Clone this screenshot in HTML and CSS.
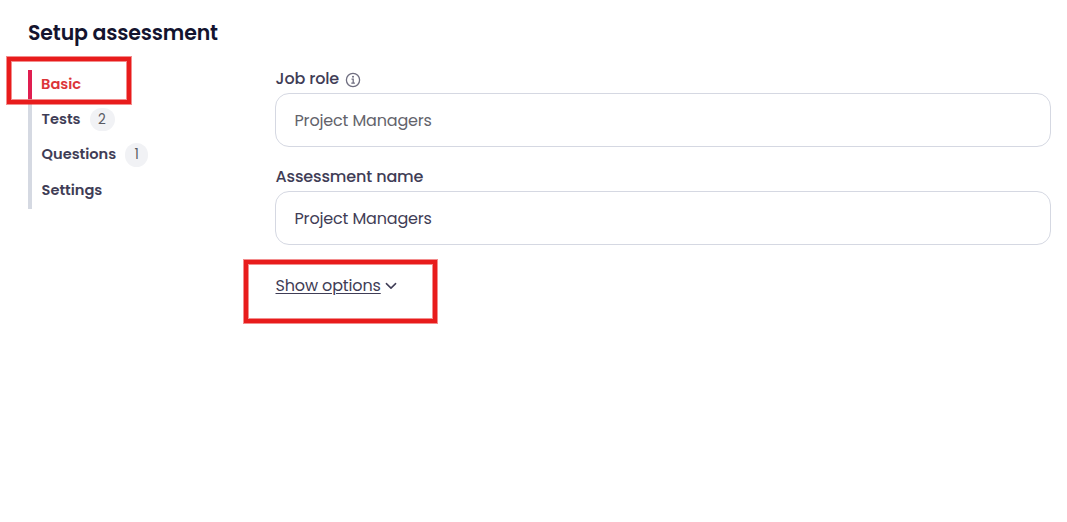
FILE: index.html
```html
<!DOCTYPE html>
<html lang="en">
<head>
<meta charset="utf-8">
<title>Setup assessment</title>
<link rel="stylesheet" href="styles.css">
</head>
<body>
<h1 class="title">Setup assessment</h1>
<div class="layout">
  <nav class="steps">
    <a class="step active">Basic</a>
    <a class="step tests">Tests<span class="count wide">2</span></a>
    <a class="step questions">Questions<span class="count">1</span></a>
    <a class="step settings">Settings</a>
  </nav>
  <main class="form">
    <div class="label first"><span>Job role</span>
      <svg class="info" viewBox="0 0 16 16" fill="none" stroke="#6f6e80" stroke-width="1.3"><circle cx="8" cy="8" r="6.6"/><path d="M6.5 7.2H8.2V11M6.3 11.1H9.9"/><circle cx="8" cy="4.8" r="1" fill="#6f6e80" stroke="none"/></svg>
    </div>
    <div class="field muted">Project Managers</div>
    <div class="label second">Assessment name</div>
    <div class="field">Project Managers</div>
    <a class="options"><span class="link">Show options</span>
      <svg class="chevron" viewBox="0 0 12 8" fill="none" stroke="#3f3d56" stroke-width="1.5" stroke-linecap="round" stroke-linejoin="round"><path d="M1.4 1.6L6 6.1L10.6 1.6"/></svg>
    </a>
  </main>
</div>
<div class="mark mark-basic"></div>
<div class="mark mark-options"></div>
</body>
</html>
```
FILE: styles.css
```css
* { box-sizing: border-box; }
body {
  margin: 0;
  position: relative;
  height: 522px;
  overflow: hidden;
  background: #fff;
  color: #3f3d56;
  font-family: Poppins, Inter, "Open Sans", sans-serif;
  font-size: 16px;
}
.title {
  margin: 0;
  padding: 16px 0 0 28px;
  height: 66px;
  font-size: 20.5px;
  line-height: 33px;
  font-weight: 600;
  letter-spacing: -0.15px;
  color: #14142f;
}
.layout {
  display: grid;
  grid-template-columns: 247px 776px;
  padding-left: 28px;
}
.steps { margin-top: 4px; }
.step {
  display: flex;
  align-items: center;
  padding-left: 9.5px;
  border-left: 4px solid #d5d9e2;
  font-size: 14.6px;
  font-weight: 600;
  line-height: 24px;
}
.active { height: 29px; padding-left: 9px; padding-bottom: 1px; color: #dc3539; border-color: #e01e50; }
.tests { height: 40px; }
.questions { height: 30px; }
.settings { height: 40px; padding-top: 2px; }
.count {
  display: flex;
  align-items: center;
  justify-content: center;
  width: 23px;
  height: 24px;
  margin-left: 9px;
  padding-top: 1px;
  border-radius: 12px;
  background: #f1f2f5;
  color: #595b63;
  font-size: 13.5px;
  font-weight: 400;
}
.questions .count { margin-top: 2px; padding: 0 0 1px; }
.count.wide { width: 25px; height: 23px; }
.label {
  display: flex;
  align-items: center;
  height: 27px;
  gap: 6px;
  font-weight: 500;
  padding-left: 0.5px;
  letter-spacing: -0.14px;
}
.first { padding-bottom: 2px; }
.second { height: 44px; padding-top: 15px; }
.info { width: 16px; height: 16px; margin-top: 2px; }
.field {
  display: flex;
  align-items: center;
  height: 54px;
  padding-left: 18.5px;
  border: 1px solid #d5d8e2;
  border-radius: 14px;
  letter-spacing: -0.16px;
}
.muted { color: #63636b; }
.options { display: flex; align-items: center; gap: 4px; margin-top: 29px; padding-left: 0.5px; height: 22px; letter-spacing: -0.14px; }
.link { text-decoration: underline; text-underline-offset: 2px; text-decoration-thickness: 1px; }
.chevron { width: 12px; height: 8px; margin-top: 1px; }
.mark {
  position: absolute;
  border: 4px solid #e81c1c;
  box-shadow: 0 0 0 1px rgba(232, 28, 28, 0.5), inset 0 0 0 1px rgba(232, 28, 28, 0.5);
}
.mark-basic { left: 7px; top: 57px; width: 124px; height: 47px; }
.mark-options { left: 244px; top: 260px; width: 193px; height: 63px; }
```
